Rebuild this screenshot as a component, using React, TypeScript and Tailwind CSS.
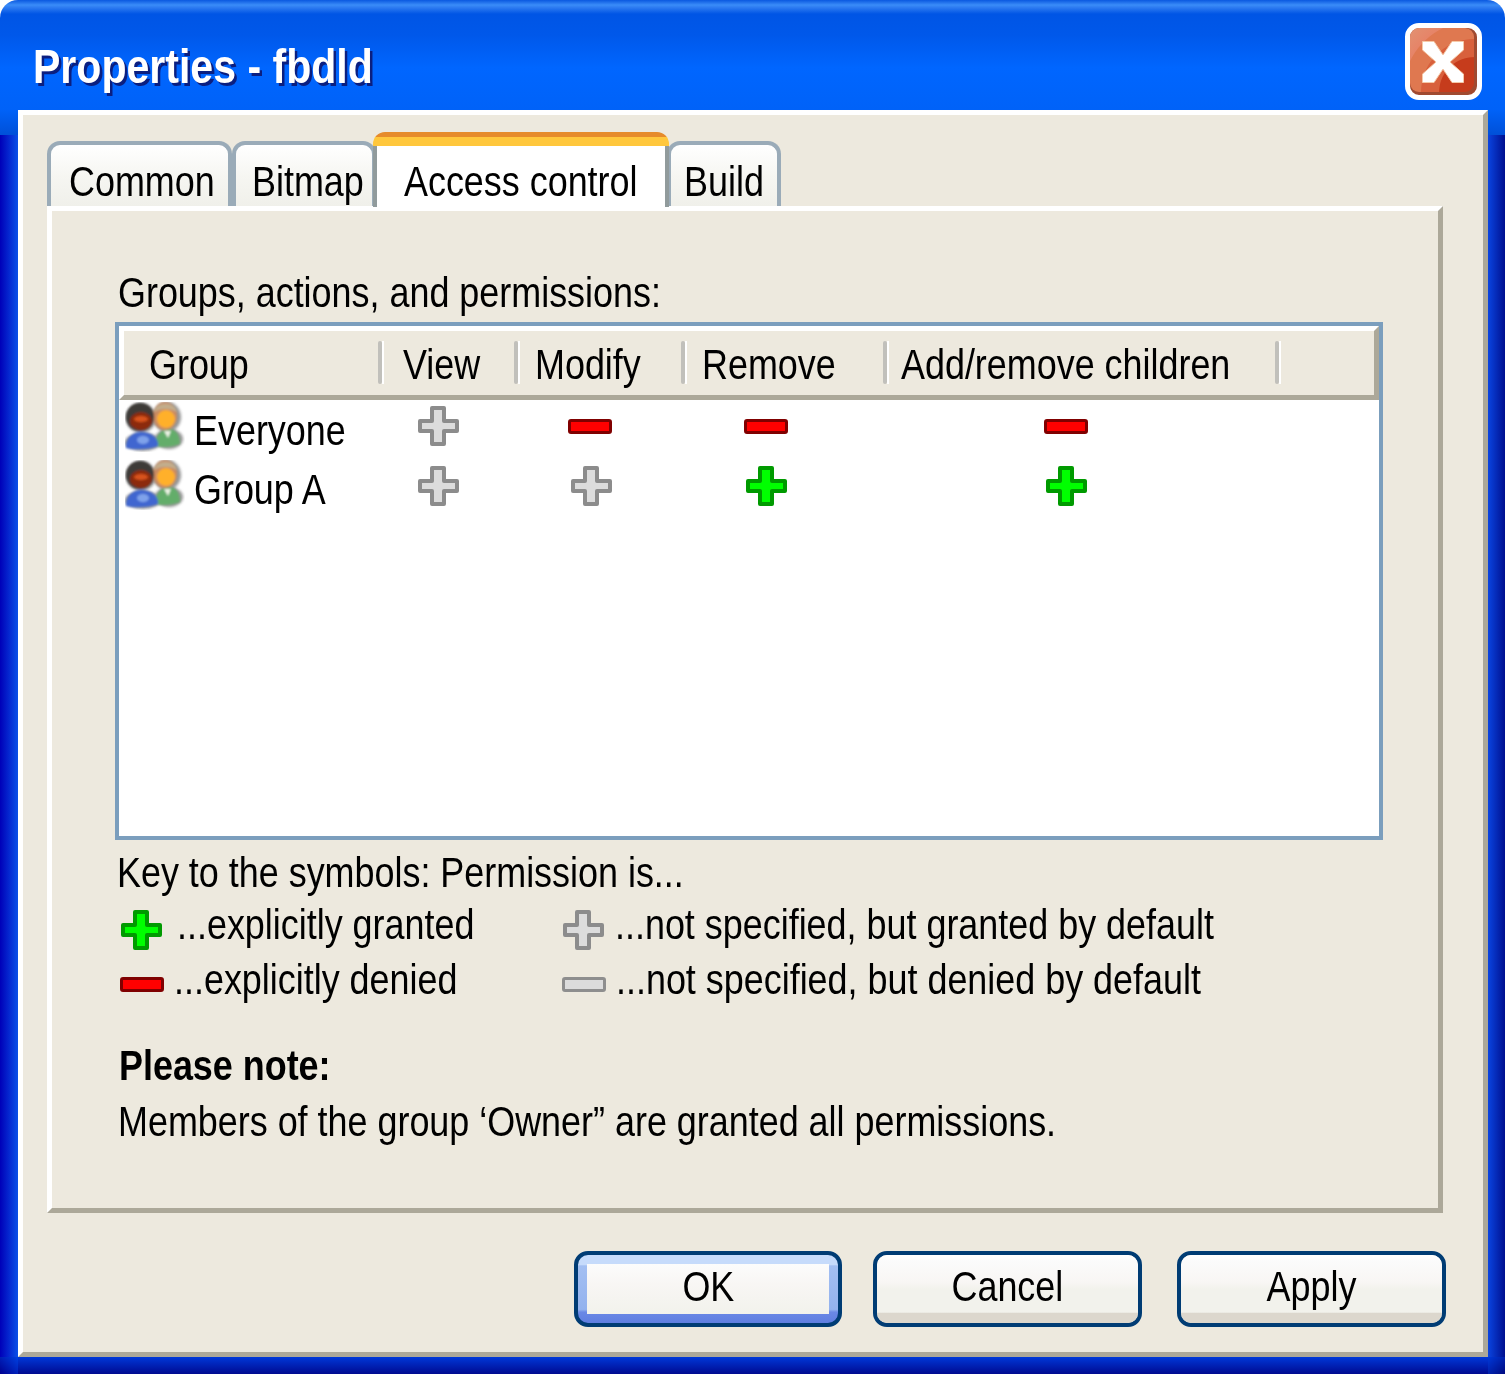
import React from "react";

const FONT = "font-['Liberation_Sans',Arial,sans-serif]";

function T({ children, center = false, bold = false }: { children: React.ReactNode; center?: boolean; bold?: boolean }) {
  return (
    <span
      className={`inline-block whitespace-nowrap scale-x-[0.855] ${center ? "origin-center" : "origin-left"} ${bold ? "font-bold" : ""}`}
    >
      {children}
    </span>
  );
}

const PLUS = "M14 2H26V15H39V25H26V38H14V25H2V15H14Z";

function Plus({ kind }: { kind: "green" | "gray" }) {
  const fill = kind === "green" ? "#00ff00" : "#dcdcdc";
  const stroke = kind === "green" ? "#009a00" : "#8c8c8c";
  return (
    <svg width="41" height="40" viewBox="0 0 41 40" className="block shrink-0">
      <path d={PLUS} fill={fill} stroke={stroke} strokeWidth="4" strokeLinejoin="round" />
    </svg>
  );
}

function Minus({ kind }: { kind: "red" | "gray" }) {
  const fill = kind === "red" ? "#ff0000" : "#dcdcdc";
  const stroke = kind === "red" ? "#800000" : "#8e8e8e";
  return (
    <svg width="44" height="15" viewBox="0 0 44 15" className="block shrink-0">
      <rect x="1.5" y="1.5" width="41" height="12" rx="1.5" fill={fill} stroke={stroke} strokeWidth="3" />
    </svg>
  );
}

function People({ id }: { id: string }) {
  return (
    <svg width="60" height="50" viewBox="0 0 60 50" className="block shrink-0">
      <defs>
        <filter id={`b${id}`} x="-20%" y="-20%" width="140%" height="140%">
          <feGaussianBlur stdDeviation="1.6" />
        </filter>
        <filter id={`s${id}`} x="-20%" y="-20%" width="140%" height="140%">
          <feGaussianBlur stdDeviation="1" />
        </filter>
      </defs>
      <g filter={`url(#b${id})`} fill="#6a6a6a" opacity="0.7">
        <ellipse cx="16" cy="16" rx="15" ry="15" />
        <ellipse cx="18" cy="40" rx="18" ry="9" />
        <ellipse cx="42" cy="15" rx="14" ry="15" />
        <ellipse cx="44" cy="37" rx="14" ry="10" />
      </g>
      <g filter={`url(#s${id})`}>
        <path d="M30 44C30 32 38 27 44 27C50 27 55 32 55 42C48 45 38 46 30 44Z" fill="#63ad6a" />
        <path d="M39 29L46 29L43 36Z" fill="#eef3e6" />
        <ellipse cx="40" cy="14" rx="12" ry="14" fill="#c98a62" />
        <path d="M29 10C31 -1 50 -1 52 10C45 6 36 6 29 10Z" fill="#c2ad8c" />
        <ellipse cx="41" cy="17" rx="9" ry="9" fill="#ffb02a" />
        <path d="M1 46C0 36 8 30 16 30C26 30 34 36 33 44C24 48 10 48 1 46Z" fill="#3f66d0" />
        <ellipse cx="18" cy="38" rx="6" ry="4" fill="#7fa2ea" />
        <ellipse cx="15" cy="15" rx="14" ry="14" fill="#3d3a38" />
        <ellipse cx="16" cy="19" rx="11" ry="9" fill="#8c2a10" />
        <ellipse cx="16" cy="17" rx="7" ry="3" fill="#d8521c" />
      </g>
    </svg>
  );
}

function Tab({ children, w, pl, active = false, cls = "" }: { children: string; w: string; pl: string; active?: boolean; cls?: string }) {
  if (active) {
    return (
      <div className={`relative z-10 flex h-[75px] flex-col overflow-hidden rounded-t-[12px] ${w} ${cls}`}>
        <div className="h-[5px] shrink-0 bg-[#e68b2c]" />
        <div className="h-[9px] shrink-0 bg-[#ffc73c]" />
        <div className={`flex flex-1 items-center border-x-[4px] border-[#919b9c] bg-white pt-[11px] ${pl}`}>
          <T>{children}</T>
        </div>
      </div>
    );
  }
  return (
    <div
      className={`flex h-[65px] items-center rounded-t-[13px] border-x-[4px] border-t-[4px] border-[#9aabb8] bg-[linear-gradient(180deg,#ffffff_0%,#f6f6f2_50%,#f0f0ea_100%)] pt-[12px] ${w} ${pl} ${cls}`}
    >
      <T>{children}</T>
    </div>
  );
}

function HeaderCell({ children, w, pl }: { children: string; w: string; pl: string }) {
  return (
    <div className={`flex h-full shrink-0 items-center justify-between ${w} ${pl}`}>
      <div className="w-0 flex-1 pt-[4px]">
        <T>{children}</T>
      </div>
      <Sep />
    </div>
  );
}

function Sep() {
  return (
    <div className="flex h-[43px] shrink-0">
      <div className="w-[4px] rounded-[2px] bg-[#c1c0bb]" />
      <div className="w-[2px] bg-white" />
    </div>
  );
}

function Cell({ w, children }: { w: string; children: React.ReactNode }) {
  return <div className={`flex shrink-0 justify-center ${w}`}>{children}</div>;
}

function Btn({ label, focus = false, cls }: { label: string; focus?: boolean; cls: string }) {
  return (
    <div
      className={`flex h-[76px] flex-col overflow-hidden rounded-[14px] border-[4px] border-[#003c74] ${cls} ${
        focus ? "bg-[linear-gradient(180deg,#c6dbfb_0%,#c6dbfb_14%,#a3bff2_16%,#93b2ee_80%,#6a88e6_84%,#5f7ee0_100%)] px-[9px] pt-[9px] pb-[9px]" : ""
      }`}
    >
      <div
        className={`flex flex-1 items-center justify-center ${
          focus
            ? "bg-[linear-gradient(180deg,#fcfcfc_0%,#f8f6f4_40%,#f2f2ec_100%)]"
            : "bg-[linear-gradient(180deg,#ffffff_0%,#fbfbfb_10%,#f8f6f4_40%,#f2f2ec_50%,#f2f2ec_84%,#dcd7cd_86%,#dcd7cd_100%)] pb-[4px]"
        } ${focus ? "pb-[4px]" : ""}`}
      >
        <T center>{label}</T>
      </div>
    </div>
  );
}

export default function App() {
  return (
    <div className={`${FONT} h-[1374px] w-[1505px] overflow-hidden rounded-t-[18px] text-[42px] leading-none text-black`}>
      {/* title bar */}
      <div className="flex h-[110px] items-start bg-[linear-gradient(180deg,#0a58e0_0px,#3a8cf8_5px,#2a78f0_8px,#0055e5_14px,#0058ea_35px,#0066ff_68px,#0062f8_110px)]">
        <div className="ml-[33px] mt-[43px] h-[48px] text-[48px] text-white [text-shadow:3px_3px_0_#0b1f80]">
          <T bold>Properties - fbdld</T>
        </div>
        <div className="ml-auto mr-[23px] mt-[23px] h-[77px] w-[77px] rounded-[14px] border-[5px] border-white bg-[#a04a30] pr-[3px] pb-[3px]">
          <div className="flex h-full w-full items-center justify-center rounded-[9px] pl-[1px] pt-[3px] bg-[radial-gradient(circle_at_100%_100%,#c63c1c_0%,#c63c1c_38%,#d8603c_39%,#d8603c_58%,#df7850_59%,#df7850_78%,#e68468_79%,#e29272_100%)]">
            <svg width="42" height="42" viewBox="0 0 42 42" className="block">
              <path d="M0.5 0.5H12L21 14L30 0.5H41.5V9L28 21L41.5 33V41.5H30L21 28L12 41.5H0.5V33L14 21L0.5 9Z" fill="#ffffff" stroke="#f5c9a8" strokeWidth="1" />
            </svg>
          </div>
        </div>
      </div>

      <div className="flex h-[1247px]">
        {/* left frame */}
        <div className="flex w-[18px] shrink-0 flex-col">
          <div className="h-[25px] bg-[linear-gradient(180deg,#0062f8,#0050d8)]" />
          <div className="flex-1 bg-[linear-gradient(90deg,#0000b8,#0a50e8)]" />
        </div>

        {/* dialog panel */}
        <div className="w-[1470px] shrink-0 border-[5px] border-b-[#aca899] border-l-white border-r-[#aca899] border-t-white bg-[#ede9de] pl-[24px] pt-[17px]">
          {/* tabs */}
          <div className="flex h-[74px] items-start">
            <div className="mt-[9px] flex">
              <Tab w="w-[185px]" pl="pl-[18px]">Common</Tab>
              <Tab w="w-[144px]" pl="pl-[16px]">Bitmap</Tab>
            </div>
            <Tab w="w-[296px]" pl="pl-[27px]" active cls="-ml-[3px]">Access control</Tab>
            <div className="-ml-[2px] mt-[9px]">
              <Tab w="w-[114px]" pl="pl-[13px]">Build</Tab>
            </div>
          </div>

          {/* tab page */}
          <div className="h-[1007px] w-[1396px] border-[5px] border-b-[#aca899] border-l-white border-r-[#aca899] border-t-white">
            <div className="ml-[66px] mt-[60px] flex h-[44px] items-center">
              <T>Groups, actions, and permissions:</T>
            </div>

            {/* list */}
            <div className="ml-[63px] mt-[7px] h-[518px] w-[1268px] border-[4px] border-[#7b9ebd] bg-white">
              <div className="flex h-[74px] items-center border-[5px] border-b-[#aca899] border-l-white border-r-[#aca899] border-t-white bg-[#ede9de] pl-[3px] pb-[1px]">
                <HeaderCell w="w-[257px]" pl="pl-[22px]">Group</HeaderCell>
                <div className="flex h-[43px] w-[19px] shrink-0" />
                <HeaderCell w="w-[117px]" pl="">View</HeaderCell>
                <div className="w-[15px] shrink-0" />
                <HeaderCell w="w-[152px]" pl="">Modify</HeaderCell>
                <div className="w-[15px] shrink-0" />
                <HeaderCell w="w-[187px]" pl="">Remove</HeaderCell>
                <div className="w-[12px] shrink-0" />
                <HeaderCell w="w-[380px]" pl="">Add/remove children</HeaderCell>
              </div>

              <div className="flex h-[59px] items-center">
                <div className="flex w-[262px] shrink-0 items-center pl-[6px]">
                  <div className="-mt-[5px]"><People id="a" /></div>
                  <div className="ml-[9px] pt-[3px]"><T>Everyone</T></div>
                </div>
                <div className="flex items-center -mt-[7px]">
                  <Cell w="w-[114px]"><Plus kind="gray" /></Cell>
                  <Cell w="w-[190px]"><Minus kind="red" /></Cell>
                  <Cell w="w-[162px]"><Minus kind="red" /></Cell>
                  <Cell w="w-[438px]"><Minus kind="red" /></Cell>
                </div>
              </div>
              <div className="flex h-[59px] items-center">
                <div className="flex w-[262px] shrink-0 items-center pl-[6px]">
                  <div className="-mt-[7px]"><People id="b" /></div>
                  <div className="ml-[9px] pt-[2px]"><T>Group A</T></div>
                </div>
                <div className="flex items-center -mt-[5px]">
                  <Cell w="w-[114px]"><Plus kind="gray" /></Cell>
                  <Cell w="w-[192px]"><Plus kind="gray" /></Cell>
                  <Cell w="w-[159px]"><Plus kind="green" /></Cell>
                  <Cell w="w-[441px]"><Plus kind="green" /></Cell>
                </div>
              </div>
            </div>

            {/* key */}
            <div className="ml-[65px] mt-[11px] flex h-[44px] items-center">
              <T>Key to the symbols: Permission is...</T>
            </div>
            <div className="ml-[69px] mt-[2px] flex h-[55px] items-center">
              <div className="mt-[10px]"><Plus kind="green" /></div>
              <div className="ml-[15px] w-[386px]"><T>...explicitly granted</T></div>
              <div className="mt-[10px]"><Plus kind="gray" /></div>
              <div className="ml-[11px]"><T>...not specified, but granted by default</T></div>
            </div>
            <div className="ml-[68px] flex h-[55px] items-center">
              <div className="mt-[10px]"><Minus kind="red" /></div>
              <div className="ml-[10px] w-[388px]"><T>...explicitly denied</T></div>
              <div className="mt-[10px]"><Minus kind="gray" /></div>
              <div className="ml-[10px]"><T>...not specified, but denied by default</T></div>
            </div>

            <div className="ml-[67px] mt-[37px] flex h-[44px] items-center">
              <T bold>Please note:</T>
            </div>
            <div className="ml-[66px] mt-[12px] flex h-[44px] items-center">
              <T>Members of the group ‘Owner” are granted all permissions.</T>
            </div>
          </div>

          {/* buttons */}
          <div className="mt-[38px] flex pl-[527px]">
            <Btn label="OK" focus cls="w-[268px]" />
            <Btn label="Cancel" cls="ml-[31px] w-[269px]" />
            <Btn label="Apply" cls="ml-[35px] w-[269px]" />
          </div>
        </div>

        {/* right frame */}
        <div className="flex w-[17px] shrink-0 flex-col">
          <div className="h-[25px] bg-[linear-gradient(180deg,#0062f8,#0050d8)]" />
          <div className="flex-1 bg-[linear-gradient(90deg,#0a44e0,#00108f)]" />
        </div>
      </div>

      {/* bottom frame */}
      <div className="flex h-[17px]">
        <div className="w-[18px] shrink-0 bg-[linear-gradient(45deg,#000090,#0040e0)]" />
        <div className="flex-1 bg-[linear-gradient(180deg,#0038d8,#000a90)]" />
        <div className="w-[17px] shrink-0 bg-[linear-gradient(315deg,#000a80,#0038d8)]" />
      </div>
    </div>
  );
}
